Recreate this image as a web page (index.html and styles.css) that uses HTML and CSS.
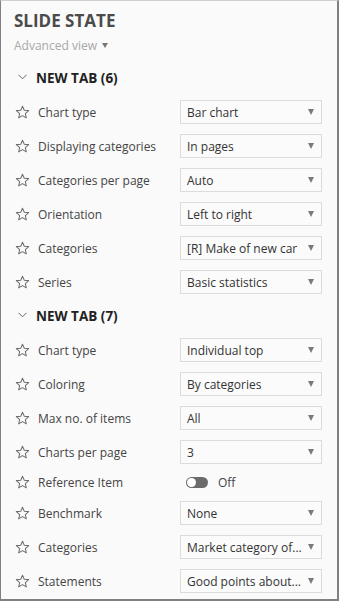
FILE: index.html
```html
<!DOCTYPE html>
<html lang="en">
<head>
    <meta charset="UTF-8" />
    <meta name="viewport" content="width=device-width, initial-scale=1" />
    <title>Slide State</title>
    <link rel="stylesheet" href="styles.css">
</head>
<body>

    <div class="panel">
        <h1 class="panel-title">SLIDE STATE</h1>
        <div class="view-switch">Advanced view <span class="caret"></span></div>

        <!-- First tab -->
        <div class="tab-header first">
            <svg class="chevron" width="9" height="6" viewBox="0 0 9 6"><path d="M0.5 0.8 L4.5 4.8 L8.5 0.8" fill="none" stroke="#666" stroke-width="1"/></svg>
            <span>NEW TAB (6)</span>
        </div>
        <div class="prop-row">
            <svg class="star" width="15" height="15" viewBox="0 0 16 16"><path d="M8 1.3 L9.9 5.6 L14.6 6 L11 9.1 L12.1 13.7 L8 11.3 L3.9 13.7 L5 9.1 L1.4 6 L6.1 5.6 Z" fill="none" stroke="#6d6d6d" stroke-width="1.1" stroke-linejoin="round"/></svg>
            <span class="prop-label">Chart type</span>
            <div class="select-box"><span>Bar chart</span><i class="arrow"></i></div>
        </div>
        <div class="prop-row">
            <svg class="star" width="15" height="15" viewBox="0 0 16 16"><path d="M8 1.3 L9.9 5.6 L14.6 6 L11 9.1 L12.1 13.7 L8 11.3 L3.9 13.7 L5 9.1 L1.4 6 L6.1 5.6 Z" fill="none" stroke="#6d6d6d" stroke-width="1.1" stroke-linejoin="round"/></svg>
            <span class="prop-label">Displaying categories</span>
            <div class="select-box"><span>In pages</span><i class="arrow"></i></div>
        </div>
        <div class="prop-row">
            <svg class="star" width="15" height="15" viewBox="0 0 16 16"><path d="M8 1.3 L9.9 5.6 L14.6 6 L11 9.1 L12.1 13.7 L8 11.3 L3.9 13.7 L5 9.1 L1.4 6 L6.1 5.6 Z" fill="none" stroke="#6d6d6d" stroke-width="1.1" stroke-linejoin="round"/></svg>
            <span class="prop-label">Categories per page</span>
            <div class="select-box"><span>Auto</span><i class="arrow"></i></div>
        </div>
        <div class="prop-row">
            <svg class="star" width="15" height="15" viewBox="0 0 16 16"><path d="M8 1.3 L9.9 5.6 L14.6 6 L11 9.1 L12.1 13.7 L8 11.3 L3.9 13.7 L5 9.1 L1.4 6 L6.1 5.6 Z" fill="none" stroke="#6d6d6d" stroke-width="1.1" stroke-linejoin="round"/></svg>
            <span class="prop-label">Orientation</span>
            <div class="select-box"><span>Left to right</span><i class="arrow"></i></div>
        </div>
        <div class="prop-row">
            <svg class="star" width="15" height="15" viewBox="0 0 16 16"><path d="M8 1.3 L9.9 5.6 L14.6 6 L11 9.1 L12.1 13.7 L8 11.3 L3.9 13.7 L5 9.1 L1.4 6 L6.1 5.6 Z" fill="none" stroke="#6d6d6d" stroke-width="1.1" stroke-linejoin="round"/></svg>
            <span class="prop-label">Categories</span>
            <div class="select-box"><span>[R] Make of new car</span><i class="arrow"></i></div>
        </div>
        <div class="prop-row">
            <svg class="star" width="15" height="15" viewBox="0 0 16 16"><path d="M8 1.3 L9.9 5.6 L14.6 6 L11 9.1 L12.1 13.7 L8 11.3 L3.9 13.7 L5 9.1 L1.4 6 L6.1 5.6 Z" fill="none" stroke="#6d6d6d" stroke-width="1.1" stroke-linejoin="round"/></svg>
            <span class="prop-label">Series</span>
            <div class="select-box"><span>Basic statistics</span><i class="arrow"></i></div>
        </div>

        <!-- Second tab -->
        <div class="tab-header">
            <svg class="chevron" width="9" height="6" viewBox="0 0 9 6"><path d="M0.5 0.8 L4.5 4.8 L8.5 0.8" fill="none" stroke="#666" stroke-width="1"/></svg>
            <span>NEW TAB (7)</span>
        </div>
        <div class="prop-row">
            <svg class="star" width="15" height="15" viewBox="0 0 16 16"><path d="M8 1.3 L9.9 5.6 L14.6 6 L11 9.1 L12.1 13.7 L8 11.3 L3.9 13.7 L5 9.1 L1.4 6 L6.1 5.6 Z" fill="none" stroke="#6d6d6d" stroke-width="1.1" stroke-linejoin="round"/></svg>
            <span class="prop-label">Chart type</span>
            <div class="select-box"><span>Individual top</span><i class="arrow"></i></div>
        </div>
        <div class="prop-row">
            <svg class="star" width="15" height="15" viewBox="0 0 16 16"><path d="M8 1.3 L9.9 5.6 L14.6 6 L11 9.1 L12.1 13.7 L8 11.3 L3.9 13.7 L5 9.1 L1.4 6 L6.1 5.6 Z" fill="none" stroke="#6d6d6d" stroke-width="1.1" stroke-linejoin="round"/></svg>
            <span class="prop-label">Coloring</span>
            <div class="select-box"><span>By categories</span><i class="arrow"></i></div>
        </div>
        <div class="prop-row">
            <svg class="star" width="15" height="15" viewBox="0 0 16 16"><path d="M8 1.3 L9.9 5.6 L14.6 6 L11 9.1 L12.1 13.7 L8 11.3 L3.9 13.7 L5 9.1 L1.4 6 L6.1 5.6 Z" fill="none" stroke="#6d6d6d" stroke-width="1.1" stroke-linejoin="round"/></svg>
            <span class="prop-label">Max no. of items</span>
            <div class="select-box"><span>All</span><i class="arrow"></i></div>
        </div>
        <div class="prop-row">
            <svg class="star" width="15" height="15" viewBox="0 0 16 16"><path d="M8 1.3 L9.9 5.6 L14.6 6 L11 9.1 L12.1 13.7 L8 11.3 L3.9 13.7 L5 9.1 L1.4 6 L6.1 5.6 Z" fill="none" stroke="#6d6d6d" stroke-width="1.1" stroke-linejoin="round"/></svg>
            <span class="prop-label">Charts per page</span>
            <div class="select-box"><span>3</span><i class="arrow"></i></div>
        </div>
        <div class="prop-row short">
            <svg class="star" width="15" height="15" viewBox="0 0 16 16"><path d="M8 1.3 L9.9 5.6 L14.6 6 L11 9.1 L12.1 13.7 L8 11.3 L3.9 13.7 L5 9.1 L1.4 6 L6.1 5.6 Z" fill="none" stroke="#6d6d6d" stroke-width="1.1" stroke-linejoin="round"/></svg>
            <span class="prop-label">Reference Item</span>
            <div class="toggle-wrap"><span class="toggle"></span><span class="toggle-text">Off</span></div>
        </div>
        <div class="prop-row">
            <svg class="star" width="15" height="15" viewBox="0 0 16 16"><path d="M8 1.3 L9.9 5.6 L14.6 6 L11 9.1 L12.1 13.7 L8 11.3 L3.9 13.7 L5 9.1 L1.4 6 L6.1 5.6 Z" fill="none" stroke="#6d6d6d" stroke-width="1.1" stroke-linejoin="round"/></svg>
            <span class="prop-label">Benchmark</span>
            <div class="select-box"><span>None</span><i class="arrow"></i></div>
        </div>
        <div class="prop-row">
            <svg class="star" width="15" height="15" viewBox="0 0 16 16"><path d="M8 1.3 L9.9 5.6 L14.6 6 L11 9.1 L12.1 13.7 L8 11.3 L3.9 13.7 L5 9.1 L1.4 6 L6.1 5.6 Z" fill="none" stroke="#6d6d6d" stroke-width="1.1" stroke-linejoin="round"/></svg>
            <span class="prop-label">Categories</span>
            <div class="select-box"><span>Market category of...</span><i class="arrow"></i></div>
        </div>
        <div class="prop-row">
            <svg class="star" width="15" height="15" viewBox="0 0 16 16"><path d="M8 1.3 L9.9 5.6 L14.6 6 L11 9.1 L12.1 13.7 L8 11.3 L3.9 13.7 L5 9.1 L1.4 6 L6.1 5.6 Z" fill="none" stroke="#6d6d6d" stroke-width="1.1" stroke-linejoin="round"/></svg>
            <span class="prop-label">Statements</span>
            <div class="select-box"><span>Good points about...</span><i class="arrow"></i></div>
        </div>
    </div>

</body>
</html>
```

FILE: styles.css
```css
* {
    margin: 0;
    padding: 0;
    box-sizing: border-box;
    font-family: 'Open Sans', sans-serif;
}
body {
    background: #fafafa;
    color: #333;
}
/* Panel frame */
.panel {
    width: 339px;
    height: 601px;
    background: #fafafa;
    border-top: 1px solid #d0d0d0;
    border-left: 1px solid #808080;
    border-right: 2px solid #808080;
    border-bottom: 2px solid #808080;
    padding: 8px 15px 0 13px;
    overflow: hidden;
}
.panel-title {
    font-size: 17px;
    font-weight: 700;
    line-height: 24px;
    color: #4b4b4b;
}
.view-switch {
    margin-top: 4px;
    font-size: 12px;
    line-height: 18px;
    color: #a8a8a8;
}
.caret {
    display: inline-block;
    width: 0;
    height: 0;
    margin-left: 2px;
    vertical-align: 2px;
    border-left: 3.5px solid transparent;
    border-right: 3.5px solid transparent;
    border-top: 5px solid #777;
}
/* Tab section header */
.tab-header {
    display: flex;
    align-items: center;
    height: 34px;
    font-size: 13.5px;
    font-weight: 700;
    color: #222;
}
.tab-header.first {
    margin-top: 6px;
}
.chevron {
    margin-left: 4px;
    margin-right: 9px;
    margin-top: -2px;
}
/* Property rows */
.prop-row {
    display: flex;
    align-items: center;
    height: 34px;
}
.prop-row.short {
    height: 27px;
}
.star {
    margin-left: 1px;
    margin-right: 8px;
    flex-shrink: 0;
}
.prop-label {
    flex: 1;
    font-size: 12px;
    color: #444;
    white-space: nowrap;
}
.select-box {
    width: 142px;
    height: 24px;
    display: flex;
    align-items: center;
    justify-content: space-between;
    padding: 0 7px 0 6px;
    background: #fbfbfb;
    border: 1px solid #dcdcdc;
    font-size: 12px;
    color: #333;
    white-space: nowrap;
}
.arrow {
    width: 0;
    height: 0;
    border-left: 3.5px solid transparent;
    border-right: 3.5px solid transparent;
    border-top: 6px solid #7a7a7a;
}
/* Toggle switch */
.toggle-wrap {
    width: 142px;
    display: flex;
    align-items: center;
    padding-left: 6px;
}
.toggle {
    position: relative;
    width: 22px;
    height: 11px;
    border-radius: 6px;
    background: #6b6b6b;
}
.toggle::after {
    content: '';
    position: absolute;
    left: 1px;
    top: 1px;
    width: 9px;
    height: 9px;
    border-radius: 50%;
    background: #fff;
}
.toggle-text {
    margin-left: 10px;
    font-size: 12px;
    color: #444;
}
```
